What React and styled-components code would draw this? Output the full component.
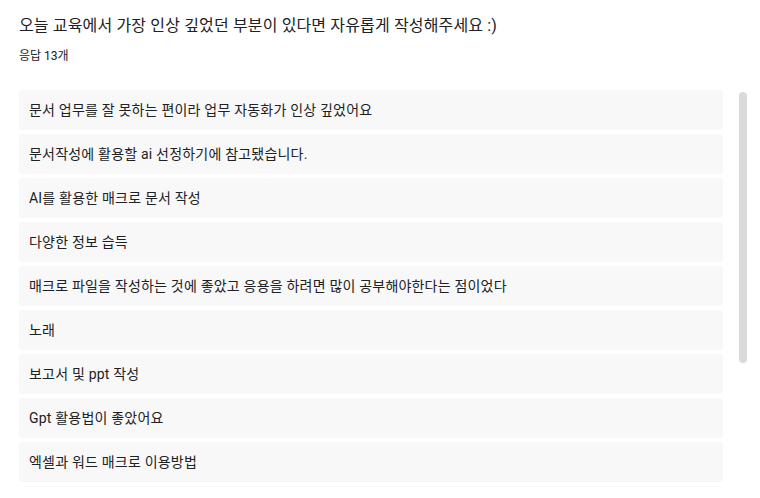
import React from "react";
import styled, { createGlobalStyle } from "styled-components";

const GlobalStyle = createGlobalStyle`
  html, body {
    margin: 0;
    padding: 0;
    background: #ffffff;
  }
  body {
    font-family: Roboto, "Noto Sans CJK KR", sans-serif;
    color: #202124;
  }
`;

const Page = styled.main`
  display: flex;
  flex-direction: column;
  padding: 14px 0 0 19px;
`;

const Title = styled.h1`
  margin: 0;
  font-size: 16px;
  line-height: 24px;
  font-weight: 400;
  letter-spacing: 0.15px;
  color: #202124;
`;

const Count = styled.div`
  margin-top: 10px;
  font-size: 12px;
  line-height: 17px;
  color: #202124;
`;

const Frame = styled.div`
  position: relative;
  margin-top: 25px;
  width: 730px;
  height: 397px;
`;

const List = styled.ul`
  margin: 0;
  padding: 0 26px 5px 0;
  list-style: none;
  height: 100%;
  box-sizing: border-box;
  overflow-y: auto;
  scrollbar-width: none;
  display: flex;
  flex-direction: column;
  gap: 4px;

  &::-webkit-scrollbar {
    display: none;
  }
`;

const Thumb = styled.div`
  position: absolute;
  top: 2px;
  right: 2px;
  width: 8px;
  height: 271px;
  border-radius: 4px;
  background: #dadada;
`;

const Answer = styled.li`
  flex: none;
  display: flex;
  align-items: center;
  box-sizing: border-box;
  height: 40px;
  padding: 0 10px 3px;
  border-radius: 4px;
  background: #f8f8f8;
  font-size: 14px;
  letter-spacing: 0.2px;
  color: #202124;
`;

const answers = [
  "문서 업무를 잘 못하는 편이라 업무 자동화가 인상 깊었어요",
  "문서작성에 활용할 ai 선정하기에 참고됐습니다.",
  "AI를 활용한 매크로 문서 작성",
  "다양한 정보 습득",
  "매크로 파일을 작성하는 것에 좋았고 응용을 하려면 많이 공부해야한다는 점이었다",
  "노래",
  "보고서 및 ppt 작성",
  "Gpt 활용법이 좋았어요",
  "엑셀과 워드 매크로 이용방법",
  "엑셀 매크로 자동화",
  "챗GPT 활용 방법",
  "업무에 바로 적용할 수 있는 내용",
  "전체적으로 유익했습니다",
];

export default function App() {
  return (
    <>
      <GlobalStyle />
      <Page>
        <Title>오늘 교육에서 가장 인상 깊었던 부분이 있다면 자유롭게 작성해주세요 :)</Title>
        <Count>응답 {answers.length}개</Count>
        <Frame>
          <List>
            {answers.map((text, i) => (
              <Answer key={i}>{text}</Answer>
            ))}
          </List>
          <Thumb />
        </Frame>
      </Page>
    </>
  );
}
